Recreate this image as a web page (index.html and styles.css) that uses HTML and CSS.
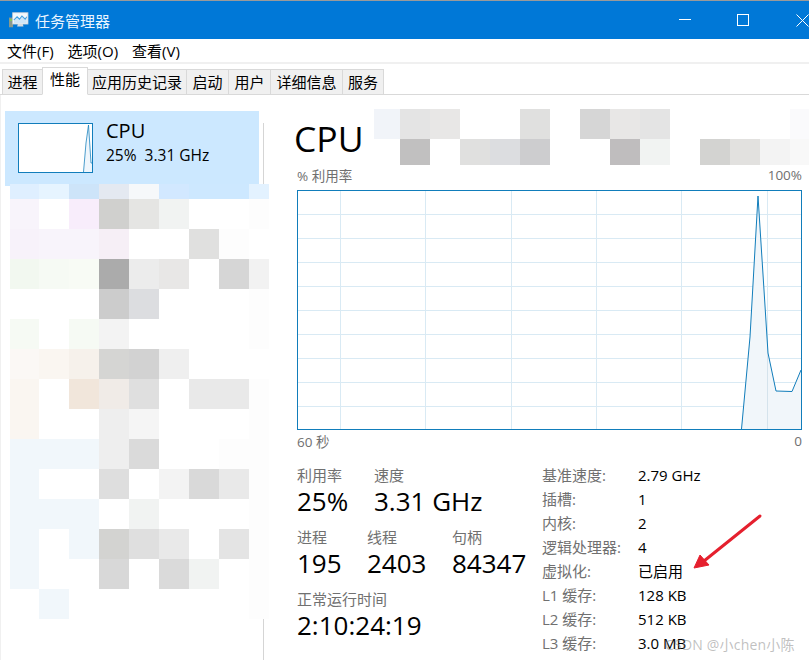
FILE: index.html
```html
<!DOCTYPE html>
<html lang="zh-CN">
<head>
<meta charset="utf-8">
<title>任务管理器</title>
<link rel="stylesheet" href="styles.css">
</head>
<body>
<div class="window">
  <header class="titlebar">
    <svg class="app-icon" width="21" height="18" viewBox="0 0 26 22">
      <rect x="0" y="8" width="5" height="12" fill="#8a9a8e"/>
      <rect x="1" y="10" width="3" height="2" fill="#7fd04f"/>
      <rect x="4.500" y="2" width="19" height="14" fill="#f4f9fd" stroke="#c4ccd4"/>
      <path d="M6 11 L10 7 L13 10 L16 6 L20 10 L22 7 V15 H6 Z" fill="#cfe6f8"/>
      <path d="M6 11 L10 7 L13 10 L16 6 L20 10 L22 7" fill="none" stroke="#3f9fe0" stroke-width="1.300"/>
      <path d="M11 16 H17 L18 19 H10 Z" fill="#d5dbe0"/>
    </svg>
    <span class="title-text">任务管理器</span>
    <div class="win-buttons">
      <svg width="13" height="13" viewBox="0 0 13 13"><path d="M1 5.500 H13" stroke="#fff"/></svg>
      <svg width="13" height="13" viewBox="0 0 13 13"><rect x="0.500" y="0.500" width="11" height="11" fill="none" stroke="#fff"/></svg>
      <svg width="13" height="13" viewBox="0 0 13 13"><path d="M0.500 0.500 L12.500 12.500 M12.500 0.500 L0.500 12.500" stroke="#fff"/></svg>
    </div>
  </header>

  <nav class="menubar">
    <span>文件(F)</span><span>选项(O)</span><span>查看(V)</span>
  </nav>

  <div class="tabs">
    <span class="tab tab-w40">进程</span>
    <span class="tab tab-active">性能</span>
    <span class="tab tab-w99">应用历史记录</span>
    <span class="tab tab-w42">启动</span>
    <span class="tab tab-w42">用户</span>
    <span class="tab tab-w72">详细信息</span>
    <span class="tab tab-w41">服务</span>
  </div>

  <div class="content">
    <aside class="sidebar">
      <div class="cpu-card">
        <svg class="thumb" width="75" height="50" viewBox="0 0 75 50">
          <path d="M65.500 49 L68 20 L70.500 2 L73 40 H74 V49 Z" fill="#eff6fc"/>
          <path d="M65.500 49 L68 20 L70.500 2 L73 40 H74" fill="none" stroke="#117dbb" stroke-opacity=".75"/>
          <rect x="0.500" y="0.500" width="74" height="49" fill="none" stroke="#117dbb"/>
        </svg>
        <div class="cpu-card-text">
          <div class="cpu-card-name">CPU</div>
          <div class="cpu-card-val">25%&nbsp; 3.31 GHz</div>
        </div>
      </div>
      <div class="side-mosaic">
        <i class="a1"></i><i class="a2"></i><i class="a3"></i><i class="a4"></i><i class="a5"></i><i class="a6"></i><i class="a7"></i><i class="a7"></i><i class="a8"></i>
        <i class="b1"></i><i></i><i class="b2"></i><i class="g-d0"></i><i class="g-e5"></i><i class="g-f1"></i><i></i><i></i><i class="g-fd"></i>
        <i class="b3"></i><i class="b1"></i><i class="b1"></i><i class="b4"></i><i></i><i></i><i class="g-e0"></i><i class="g-fd"></i><i></i>
        <i class="c1"></i><i class="c2"></i><i class="c3"></i><i class="g-ab"></i><i class="g-ec"></i><i class="g-e8"></i><i></i><i class="g-d6"></i><i class="g-f2"></i>
        <i></i><i></i><i></i><i class="g-cc"></i><i class="g-dc"></i><i></i><i></i><i></i><i class="g-fd"></i>
        <i class="c2"></i><i></i><i class="c2"></i><i class="g-f3"></i><i></i><i></i><i></i><i></i><i class="g-fd"></i>
        <i class="d1"></i><i class="d2"></i><i class="d3"></i><i class="g-d5"></i><i class="g-d2"></i><i class="g-ef"></i><i></i><i></i><i></i>
        <i class="d2"></i><i></i><i class="d4"></i><i class="d5"></i><i class="g-df"></i><i></i><i class="g-e9"></i><i class="g-e9"></i><i class="g-fd"></i>
        <i class="d2"></i><i></i><i></i><i class="g-ee"></i><i class="g-f5"></i><i></i><i></i><i></i><i class="g-fd"></i>
        <i class="e1"></i><i class="e1"></i><i class="e1"></i><i class="g-ee"></i><i class="g-da"></i><i></i><i></i><i class="g-fd"></i><i class="g-fd"></i>
        <i class="e1"></i><i></i><i></i><i class="g-de"></i><i></i><i class="g-f3"></i><i class="g-d9"></i><i class="g-e9"></i><i class="g-fd"></i>
        <i class="e1"></i><i class="e1"></i><i class="e1"></i><i></i><i class="g-f1"></i><i></i><i></i><i></i><i class="g-fd"></i>
        <i class="e1"></i><i></i><i class="e1"></i><i class="g-d3"></i><i class="g-df"></i><i class="g-e9"></i><i></i><i class="g-e4"></i><i class="g-fd"></i>
        <i class="e1"></i><i></i><i></i><i class="g-d8"></i><i></i><i class="g-da"></i><i class="g-f1"></i><i></i><i class="g-fd"></i>
        <i></i><i class="e1"></i><i></i><i></i><i></i><i></i><i></i><i></i><i class="g-fd"></i>
      </div>
    </aside>

    <main class="main">
      <div class="head">
        <h1 class="cpu-title">CPU</h1>
        <div class="head-mosaic">
          <i class="h0"></i><i class="g-e4"></i><i class="g-e8"></i><i></i><i></i><i class="g-e0"></i><i></i><i class="g-d6"></i><i class="g-e8"></i><i class="g-e4"></i><i></i><i></i><i></i><i></i><i class="h1"></i>
          <i></i><i class="g-c0"></i><i></i><i class="g-e0"></i><i class="g-dc"></i><i class="g-cd"></i><i></i><i></i><i class="g-be"></i><i class="g-f1"></i><i></i><i class="g-d3"></i><i class="g-e1"></i><i class="g-f3"></i><i class="g-f8"></i>
        </div>
      </div>

      <div class="graph-labels"><span>% 利用率</span><span>100%</span></div>
      <svg class="graph" width="505" height="240" viewBox="0 0 505 240">
        <path d="M0 24.500 H505 M0 48.500 H505 M0 72.500 H505 M0 96.500 H505 M0 120.500 H505 M0 144.500 H505 M0 168.500 H505 M0 192.500 H505 M0 216.500 H505 M43.500 0 V240 M128.500 0 V240 M214.500 0 V240 M299.500 0 V240 M384.500 0 V240 M470.500 0 V240" stroke="#d9eaf4" fill="none"/>
        <path d="M444.500 239 L453 147 L461 6 L471 163 L479 201 L495 201.500 L504 180 V239 Z" fill="#f1f6fa"/>
        <path d="M470.500 150 V239" stroke="#d5e3ec"/>
        <path d="M444.500 239 L453 147 L461 6 L471 163 L479 201 L495 201.500 L504 180" fill="none" stroke="#117dbb"/>
        <rect x="0.500" y="0.500" width="504" height="239" fill="none" stroke="#117dbb"/>
      </svg>
      <div class="graph-labels graph-foot"><span>60 秒</span><span>0</span></div>

      <div class="stats">
        <div class="stats-left">
          <div class="stat-row">
            <div class="stat stat-77"><div class="stat-label">利用率</div><div class="stat-value">25%</div></div>
            <div class="stat"><div class="stat-label">速度</div><div class="stat-value">3.31 GHz</div></div>
          </div>
          <div class="stat-row">
            <div class="stat stat-70"><div class="stat-label">进程</div><div class="stat-value">195</div></div>
            <div class="stat stat-85"><div class="stat-label">线程</div><div class="stat-value">2403</div></div>
            <div class="stat"><div class="stat-label">句柄</div><div class="stat-value">84347</div></div>
          </div>
          <div class="stat-row">
            <div class="stat"><div class="stat-label">正常运行时间</div><div class="stat-value">2:10:24:19</div></div>
          </div>
        </div>
        <dl class="specs">
          <dt>基准速度:</dt><dd>2.79 GHz</dd>
          <dt>插槽:</dt><dd>1</dd>
          <dt>内核:</dt><dd>2</dd>
          <dt>逻辑处理器:</dt><dd>4</dd>
          <dt>虚拟化:</dt><dd>已启用</dd>
          <dt>L1 缓存:</dt><dd>128 KB</dd>
          <dt>L2 缓存:</dt><dd>512 KB</dd>
          <dt>L3 缓存:</dt><dd>3.0 MB</dd>
        </dl>
      </div>
    </main>
  </div>

  <svg class="arrow" width="72" height="58" viewBox="0 0 72 58">
    <path d="M68 3 L12 48" stroke="#e5202e" stroke-width="3" stroke-linecap="round"/>
    <path d="M2 55 L8 42 L17 52 Z" fill="#e5202e" stroke="#e5202e" stroke-linejoin="round"/>
  </svg>
  <div class="watermark">CSDN @小chen小陈</div>
</div>
</body>
</html>
```
FILE: styles.css
```css
* { box-sizing: border-box; }
html, body { margin: 0; padding: 0; }
body {
  width: 809px;
  height: 660px;
  overflow: hidden;
  background: #fff;
  font-family: "Open Sans", "Noto Sans CJK SC", sans-serif;
  color: #000;
}
.window { position: relative; width: 809px; height: 660px; border-top: 1px solid #9a9a9a; }

.titlebar {
  height: 38px;
  background: #0078d7;
  display: flex;
  align-items: center;
  padding-left: 9px;
  color: #fff;
}
.app-icon { margin-right: 5px; }
.title-text { font-size: 15px; color: #eaf5ff; }
.win-buttons {
  margin-left: auto;
  margin-top: 1px;
  display: flex;
  gap: 46px;
}
.win-buttons svg { display: block; }

.menubar {
  height: 23px;
  display: flex;
  align-items: center;
  gap: 14px;
  padding-left: 7px;
  font-size: 15px;
}
.tabs {
  height: 33px;
  border-top: 2px solid #f0f0f0;
  border-bottom: 1px solid #d9d9d9;
  display: flex;
  align-items: flex-end;
  padding: 0 0 0 2px;
}
.tab {
  height: 26px;
  margin-bottom: -1px;
  background: #f0f0f0;
  border: 1px solid #d9d9d9;
  margin-right: -1px;
  font-size: 15px;
  line-height: 24px;
  text-align: center;
  white-space: nowrap;
}
.tab-w40 { width: 41px; }
.tab-w99 { width: 100px; }
.tab-w42 { width: 43px; }
.tab-w72 { width: 73px; }
.tab-w41 { width: 42px; }
.tab-active {
  width: 46px;
  height: 28px;
  background: #fff;
  border-bottom-color: #fff;
  line-height: 23px;
  position: relative;
}

.content { display: flex; height: 565px; border-left: 1px solid #f0f0f0; }
.sidebar { position: relative; width: 263px; padding: 16px 0 0 4px; flex: none; }
.sidebar::after {
  content: "";
  position: absolute;
  right: 0;
  top: 28px;
  bottom: 0;
  width: 1px;
  background: #d5d5d5;
}
.cpu-card {
  width: 254px;
  height: 75px;
  background: #cce8ff;
  display: flex;
  padding: 12px 0 0 13px;
}
.thumb { display: block; background: #fff; }
.cpu-card-text { margin-left: 13px; }
.cpu-card-name { font-size: 20px; line-height: 27px; margin-top: -6px; }
.cpu-card-val { font-size: 15.500px; line-height: 20px; margin-top: 1px; }

.side-mosaic {
  position: absolute;
  z-index: 1;
  left: 9px;
  top: 89px;
  display: grid;
  grid-template-columns: 29px repeat(7, 30px) 20px;
  grid-template-rows: 15px repeat(14, 30px);
}
.side-mosaic i, .head-mosaic i { display: block; background: #fff; }

.main { flex: 1; padding-left: 33px; position: relative; }
.head { height: 60px; position: relative; padding-top: 19px; }
.cpu-title { margin: 0; font-size: 35.500px; font-weight: 400; line-height: 48px; margin-left: -3px; }
.head-mosaic {
  position: absolute;
  left: 77px;
  top: 14px;
  display: grid;
  grid-template-columns: 26px repeat(14, 30px);
  grid-template-rows: 30px 26px;
}
.graph-labels {
  width: 505px;
  margin-top: 11px;
  height: 18px;
  display: flex;
  justify-content: space-between;
  align-items: center;
  font-size: 13.500px;
  color: #707070;
}
.graph { display: block; margin-top: 6px; }
.graph-foot { margin-top: 2px; }

.stats { display: flex; margin-top: 15px; }
.stats-left { width: 245px; flex: none; }
.stat-row { display: flex; height: 62px; }
.stat-77 { width: 77px; }
.stat-70 { width: 70px; }
.stat-85 { width: 85px; }
.stat-label { font-size: 15px; line-height: 20px; color: #707070; }
.stat-value { font-size: 26px; line-height: 32px; white-space: nowrap; }
.specs {
  margin: -2px 0 0;
  display: grid;
  grid-template-columns: 96px auto;
  grid-auto-rows: 24px;
  font-size: 15px;
  line-height: 24px;
}
.specs dt { color: #707070; }
.specs dd { margin: 0; }

.g-ab { background: #ababab !important; } .g-be { background: #bfbdbe !important; }
.g-c0 { background: #c1c0c0 !important; } .g-cc { background: #cccccc !important; }
.g-cd { background: #cdcdcf !important; } .g-d0 { background: #d0d0ce !important; }
.g-d2 { background: #d2d2d2 !important; } .g-d3 { background: #d3d3d1 !important; }
.g-d5 { background: #d5d5d3 !important; } .g-d6 { background: #d6d6d6 !important; }
.g-d8 { background: #d8d8d8 !important; } .g-d9 { background: #d9d9d9 !important; }
.g-da { background: #dadada !important; } .g-dc { background: #dcdde0 !important; }
.g-de { background: #dedede !important; } .g-df { background: #dfdfdf !important; }
.g-e0 { background: #e0e0df !important; } .g-e1 { background: #e2e1df !important; }
.g-e4 { background: #e4e4e4 !important; } .g-e5 { background: #e5e5e3 !important; }
.g-e8 { background: #e8e7e6 !important; } .g-e9 { background: #e9e9e9 !important; }
.g-ec { background: #ececec !important; } .g-ee { background: #eeeeee !important; }
.g-ef { background: #efefef !important; } .g-f1 { background: #f1f3f2 !important; }
.g-f2 { background: #f2f2f2 !important; } .g-f3 { background: #f3f3f3 !important; }
.g-f5 { background: #f5f5f5 !important; } .g-f8 { background: #f8f8f8 !important; }
.g-fd { background: #fdfdfd !important; }
.a1 { background: #dfefff !important; } .a2 { background: #e6f4ff !important; }
.a3 { background: #cde4f9 !important; } .a4 { background: #e4e9f1 !important; }
.a5 { background: #f6f8fa !important; } .a6 { background: #d2e8ff !important; }
.a7 { background: #cde8ff !important; } .a8 { background: #e3f2ff !important; }
.b1 { background: #f8f4fb !important; } .b2 { background: #f8edfb !important; }
.b3 { background: #f7f2fa !important; } .b4 { background: #f6eff6 !important; }
.c1 { background: #f2f8f0 !important; } .c2 { background: #f6faf4 !important; }
.c3 { background: #f8fbf5 !important; }
.d1 { background: #fbf8f5 !important; } .d2 { background: #faf6f1 !important; }
.d3 { background: #f6f1eb !important; } .d4 { background: #f1e6db !important; }
.d5 { background: #f0ebe7 !important; }
.e1 { background: #f1f7fb !important; }
.h0 { background: #f1f4f9 !important; } .h1 { background: #fafafc !important; }

.arrow { position: absolute; left: 692px; top: 512px; }
.watermark {
  position: absolute;
  left: 665px;
  top: 634px;
  font-size: 14px;
  line-height: 20px;
  letter-spacing: 0.200px;
  color: rgba(130, 130, 130, 0.5);
  white-space: nowrap;
}
```
